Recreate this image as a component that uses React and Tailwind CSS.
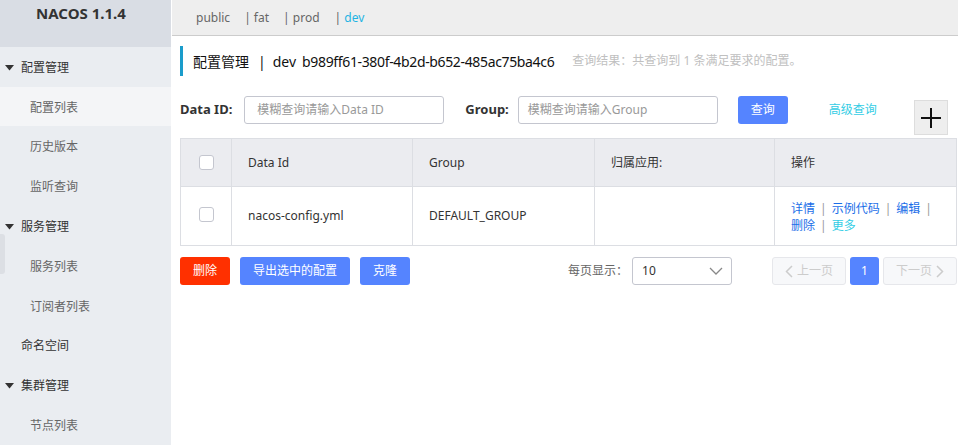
import React from "react";

const font = { fontFamily: '"Noto Sans", "Noto Sans CJK SC", sans-serif' };

const Caret = () => (
  <svg width="9" height="6" viewBox="0 0 9 6" className="shrink-0">
    <path d="M0 0h9L4.5 5.5z" fill="#333" />
  </svg>
);

const menu = [
  { label: "配置管理", group: true },
  { label: "配置列表", active: true },
  { label: "历史版本" },
  { label: "监听查询" },
  { label: "服务管理", group: true },
  { label: "服务列表", marker: true },
  { label: "订阅者列表" },
  { label: "命名空间", top: true },
  { label: "集群管理", group: true },
  { label: "节点列表" },
];

const Sidebar = () => (
  <aside className="w-[171px] shrink-0 bg-[#eaedf1] flex flex-col">
    <div className="h-[47px] bg-[#d9dde4] flex justify-center pt-[2px] pr-[9px]">
      <span className="text-[15px] font-bold text-[#333]">NACOS 1.1.4</span>
    </div>
    {menu.map((m) => (
      <div
        key={m.label}
        className={`relative h-10 pt-[2px] flex items-center text-[12px] ${m.active ? "bg-[#f4f5f7]" : ""} ${
          m.group ? "pl-[5px] text-[#333]" : m.top ? "pl-[21px] text-[#333]" : "pl-[30px] text-[#666]"
        }`}
      >
        {m.group && (
          <span className="mr-[7px] flex">
            <Caret />
          </span>
        )}
        {m.marker && <span className="absolute left-0 top-[-12px] w-[5px] h-[40px] bg-[#dcdfe4] rounded-r-[3px]" />}
        {m.label}
      </div>
    ))}
  </aside>
);

const Sep = () => <span className="text-[#999] mx-[5px]">|</span>;

const App = () => (
  <div className="flex h-[445px] w-[964px] overflow-hidden bg-white text-[12px]" style={font}>
    <Sidebar />
    <main className="flex-1 pr-[6px] pl-[1px]">
      <div className="h-[36px] bg-[#eeeeee] border-b border-[#cccccc] flex items-center pl-[24px] text-[12px] text-[#666]">
        <span>public</span>
        <span className="ml-[14px]">| fat</span>
        <span className="ml-[14px]">| prod</span>
        <span className="ml-[15px] text-[#1fb4e3]">
          <span className="text-[#666]">|</span> dev
        </span>
      </div>

      <div className="pl-[8px]">
        <div className="mt-[10px] flex items-center h-[30px] border-l-[3px] border-[#1a9ccb] pl-[10px] text-[14px] text-[#111]">
          <span>配置管理</span>
          <span className="ml-[9px] mr-[7px]">|</span>
          <span>dev</span>
          <span className="ml-[6px] tracking-[-0.35px]">b989ff61-380f-4b2d-b652-485ac75ba4c6</span>
          <span className="text-[12px] text-[#c0c0c0] ml-[18px]">查询结果：共查询到 1 条满足要求的配置。</span>
        </div>

        <div className="mt-[20px] flex items-start">
          <div className="flex items-center h-[28px]">
            <span className="text-[13px] font-bold text-[#333]">Data ID:</span>
            <div className="ml-[12px] w-[200px] h-[28px] border border-[#c4c6cf] rounded-[3px] flex items-center pl-[12px] text-[#999]">
              模糊查询请输入Data ID
            </div>
            <span className="ml-[21px] text-[13px] font-bold text-[#333]">Group:</span>
            <div className="ml-[9px] w-[200px] h-[28px] border border-[#c4c6cf] rounded-[3px] flex items-center pl-[9px] text-[#999]">
              模糊查询请输入Group
            </div>
            <button className="ml-[20px] w-[50px] h-[28px] bg-[#5584ff] rounded-[3px] text-white">查询</button>
            <span className="ml-[41px] text-[#33cde5]">高级查询</span>
          </div>
          <div className="ml-[37px] mt-[4px] w-[34px] h-[35px] bg-[#eeeeee] border border-[#dddddd] flex items-center justify-center">
            <svg width="22" height="22" viewBox="0 0 22 22">
              <path d="M11 1v20M1 11h20" stroke="#111" strokeWidth="2" />
            </svg>
          </div>
        </div>

        <table className="mt-[3px] w-[777px] border-collapse text-[#333] table-fixed">
          <colgroup>
            <col className="w-[51px]" />
            <col className="w-[181px]" />
            <col className="w-[182px]" />
            <col className="w-[180px]" />
            <col />
          </colgroup>
          <thead>
            <tr className="h-[48px] bg-[#ebecf0]">
              <th className="border border-[#dcdee3] font-normal">
                <span className="block mx-auto w-[15px] h-[15px] bg-white border border-[#c4c6cf] rounded-[3px] -mt-[1px]" />
              </th>
              <th className="border border-[#dcdee3] font-normal text-left pl-[16px]">Data Id</th>
              <th className="border border-[#dcdee3] font-normal text-left pl-[16px]">Group</th>
              <th className="border border-[#dcdee3] font-normal text-left pl-[16px]">归属应用:</th>
              <th className="border border-[#dcdee3] font-normal text-left pl-[16px]">操作</th>
            </tr>
          </thead>
          <tbody>
            <tr className="h-[59px]">
              <td className="border border-[#dcdee3]">
                <span className="block mx-auto w-[15px] h-[15px] bg-white border border-[#c4c6cf] rounded-[3px] -mt-[3px]" />
              </td>
              <td className="border border-[#dcdee3] pl-[16px]">nacos-config.yml</td>
              <td className="border border-[#dcdee3] pl-[16px]">DEFAULT_GROUP</td>
              <td className="border border-[#dcdee3]" />
              <td className="border border-[#dcdee3] pl-[16px] pt-[2px] leading-[17px] text-[#1a6ee8]">
                <div>
                  详情<Sep />示例代码<Sep />编辑<Sep />
                </div>
                <div>
                  删除<Sep />
                  <span className="text-[#33cde5]">更多</span>
                </div>
              </td>
            </tr>
          </tbody>
        </table>

        <div className="mt-[11px] flex items-center h-[28px]">
          <button className="w-[50px] h-[28px] bg-[#ff3000] rounded-[3px] text-white">删除</button>
          <button className="ml-[10px] w-[110px] h-[28px] bg-[#5584ff] rounded-[3px] text-white">导出选中的配置</button>
          <button className="ml-[10px] w-[50px] h-[28px] bg-[#5584ff] rounded-[3px] text-white">克隆</button>
          <span className="ml-[158px] text-[#666] whitespace-nowrap shrink-0">每页显示：</span>
          <div className="ml-[4px] shrink-0 w-[100px] h-[28px] border border-[#c4c6cf] rounded-[3px] flex items-center justify-between pl-[9px] pr-[8px] text-[#333]">
            <span>10</span>
            <svg width="14" height="8" viewBox="0 0 14 8">
              <path d="M1 1l6 6 6-6" fill="none" stroke="#888" strokeWidth="1.3" />
            </svg>
          </div>
          <div className="ml-[40px] shrink-0 w-[74px] h-[28px] bg-[#f7f8fa] border border-[#e6e7eb] rounded-[3px] flex items-center justify-center text-[#cccccc] gap-[4px]">
            <svg width="8" height="13" viewBox="0 0 8 13">
              <path d="M7 1L1.5 6.5 7 12" fill="none" stroke="#cccccc" strokeWidth="1.5" />
            </svg>
            上一页
          </div>
          <div className="ml-[4px] shrink-0 w-[29px] h-[28px] bg-[#5584ff] rounded-[3px] flex items-center justify-center text-white">1</div>
          <div className="ml-[4px] shrink-0 w-[74px] h-[28px] bg-[#f7f8fa] border border-[#e6e7eb] rounded-[3px] flex items-center justify-center text-[#cccccc] gap-[4px]">
            下一页
            <svg width="8" height="13" viewBox="0 0 8 13">
              <path d="M1 1l5.5 5.5L1 12" fill="none" stroke="#cccccc" strokeWidth="1.5" />
            </svg>
          </div>
        </div>
      </div>
    </main>
  </div>
);

export default App;
